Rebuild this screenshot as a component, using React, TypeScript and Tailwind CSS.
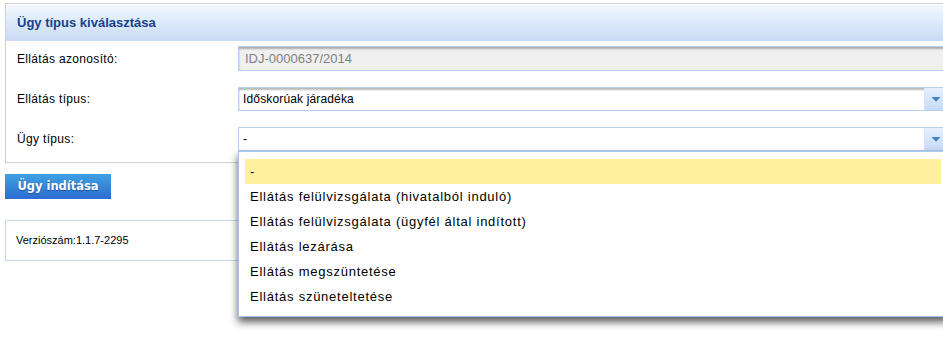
import React from "react";

const items = [
  "-",
  "Ellátás felülvizsgálata (hivatalból induló)",
  "Ellátás felülvizsgálata (ügyfél által indított)",
  "Ellátás lezárása",
  "Ellátás megszüntetése",
  "Ellátás szüneteltetése",
];

function Arrow() {
  return (
    <svg width="8" height="5" viewBox="0 0 8 5" className="block">
      <rect x="0" y="0" width="8" height="1" fill="#4a80bd" />
      <polygon points="0.5,1 7.5,1 4,4.8" fill="#4a80bd" />
    </svg>
  );
}

function SelectBox({ value, open }: { value: string; open?: boolean }) {
  return (
    <div
      className={
        "flex h-[24px] w-[710px] border border-[#b5cdee] bg-white " +
        (open ? "" : "shadow-[inset_0_2px_2px_rgba(0,0,0,0.28)]")
      }
    >
      <div className="flex flex-1 items-center pl-[4px] text-[12px] tracking-[0.15px] text-black">{value}</div>
      <div className="flex w-[23px] items-center justify-center border-l border-[#d6e4f7] bg-gradient-to-b from-[#e6f0fd] to-[#c7dbf6]">
        <Arrow />
      </div>
    </div>
  );
}

export default function App() {
  return (
    <div
      className="relative h-[348px] w-[943px] overflow-hidden bg-white pl-[5px] pt-[3px]"
      style={{ fontFamily: '"Liberation Sans", Arial, sans-serif' }}
    >
      {/* Outer panel */}
      <div className="w-[960px] border border-[#d0d0d0]">
        <div className="flex h-[37px] items-center border-t border-white bg-gradient-to-b from-[#f1f7ff] to-[#c8dbf5] pl-[11px]">
          <span className="text-[13px] font-bold text-[#15428b]">Ügy típus kiválasztása</span>
        </div>
        <div className="flex flex-col gap-[16px] pb-[11px] pl-[11px] pt-[5px]">
          <div className="flex items-center">
            <div className="w-[221px] text-[12px] tracking-[0.33px] text-black">Ellátás azonosító:</div>
            <div className="flex h-[25px] w-[710px] items-center border border-[#b5cdee] bg-[#f0f0f0] pl-[6px] text-[13px] text-[#808080] shadow-[inset_0_2px_2px_rgba(0,0,0,0.28)]">
              IDJ-0000637/2014
            </div>
          </div>
          <div className="flex items-center">
            <div className="w-[221px] text-[12px] tracking-[0.33px] text-black">Ellátás típus:</div>
            <SelectBox value="Időskorúak járadéka" />
          </div>
          <div className="flex items-center">
            <div className="w-[221px] text-[12px] tracking-[0.33px] text-black">Ügy típus:</div>
            <SelectBox value="-" open />
          </div>
        </div>
      </div>

      {/* Button */}
      <div className="mt-[11px]">
        <button
          className="flex h-[25px] w-[106px] items-center justify-center bg-gradient-to-b from-[#3fa2e3] to-[#2b6bd0] text-[11.5px] font-bold text-white [text-shadow:0_1px_1px_rgba(0,0,0,0.35)]"
          style={{ fontFamily: '"DejaVu Sans", Verdana, sans-serif' }}
        >
          Ügy indítása
        </button>
      </div>

      {/* Version panel */}
      <div className="mt-[21px] flex h-[41px] w-[960px] items-center border border-[#c5d9f1] pl-[10px] text-[11px] text-black">
        Verziószám:1.1.7-2295
      </div>

      {/* Dropdown list */}
      <div className="absolute left-[238px] top-[151px] w-[710px] border border-[#a9c6ec] bg-white px-[6px] py-[7px] shadow-[0_5px_8px_rgba(0,0,0,0.65)]">
        {items.map((it, i) => (
          <div
            key={it}
            className={
              "flex h-[25px] items-center pl-[5px] text-[13px] tracking-[0.75px] text-black " +
              (i === 0 ? "bg-[#fff09f]" : "")
            }
          >
            {it}
          </div>
        ))}
      </div>
    </div>
  );
}
